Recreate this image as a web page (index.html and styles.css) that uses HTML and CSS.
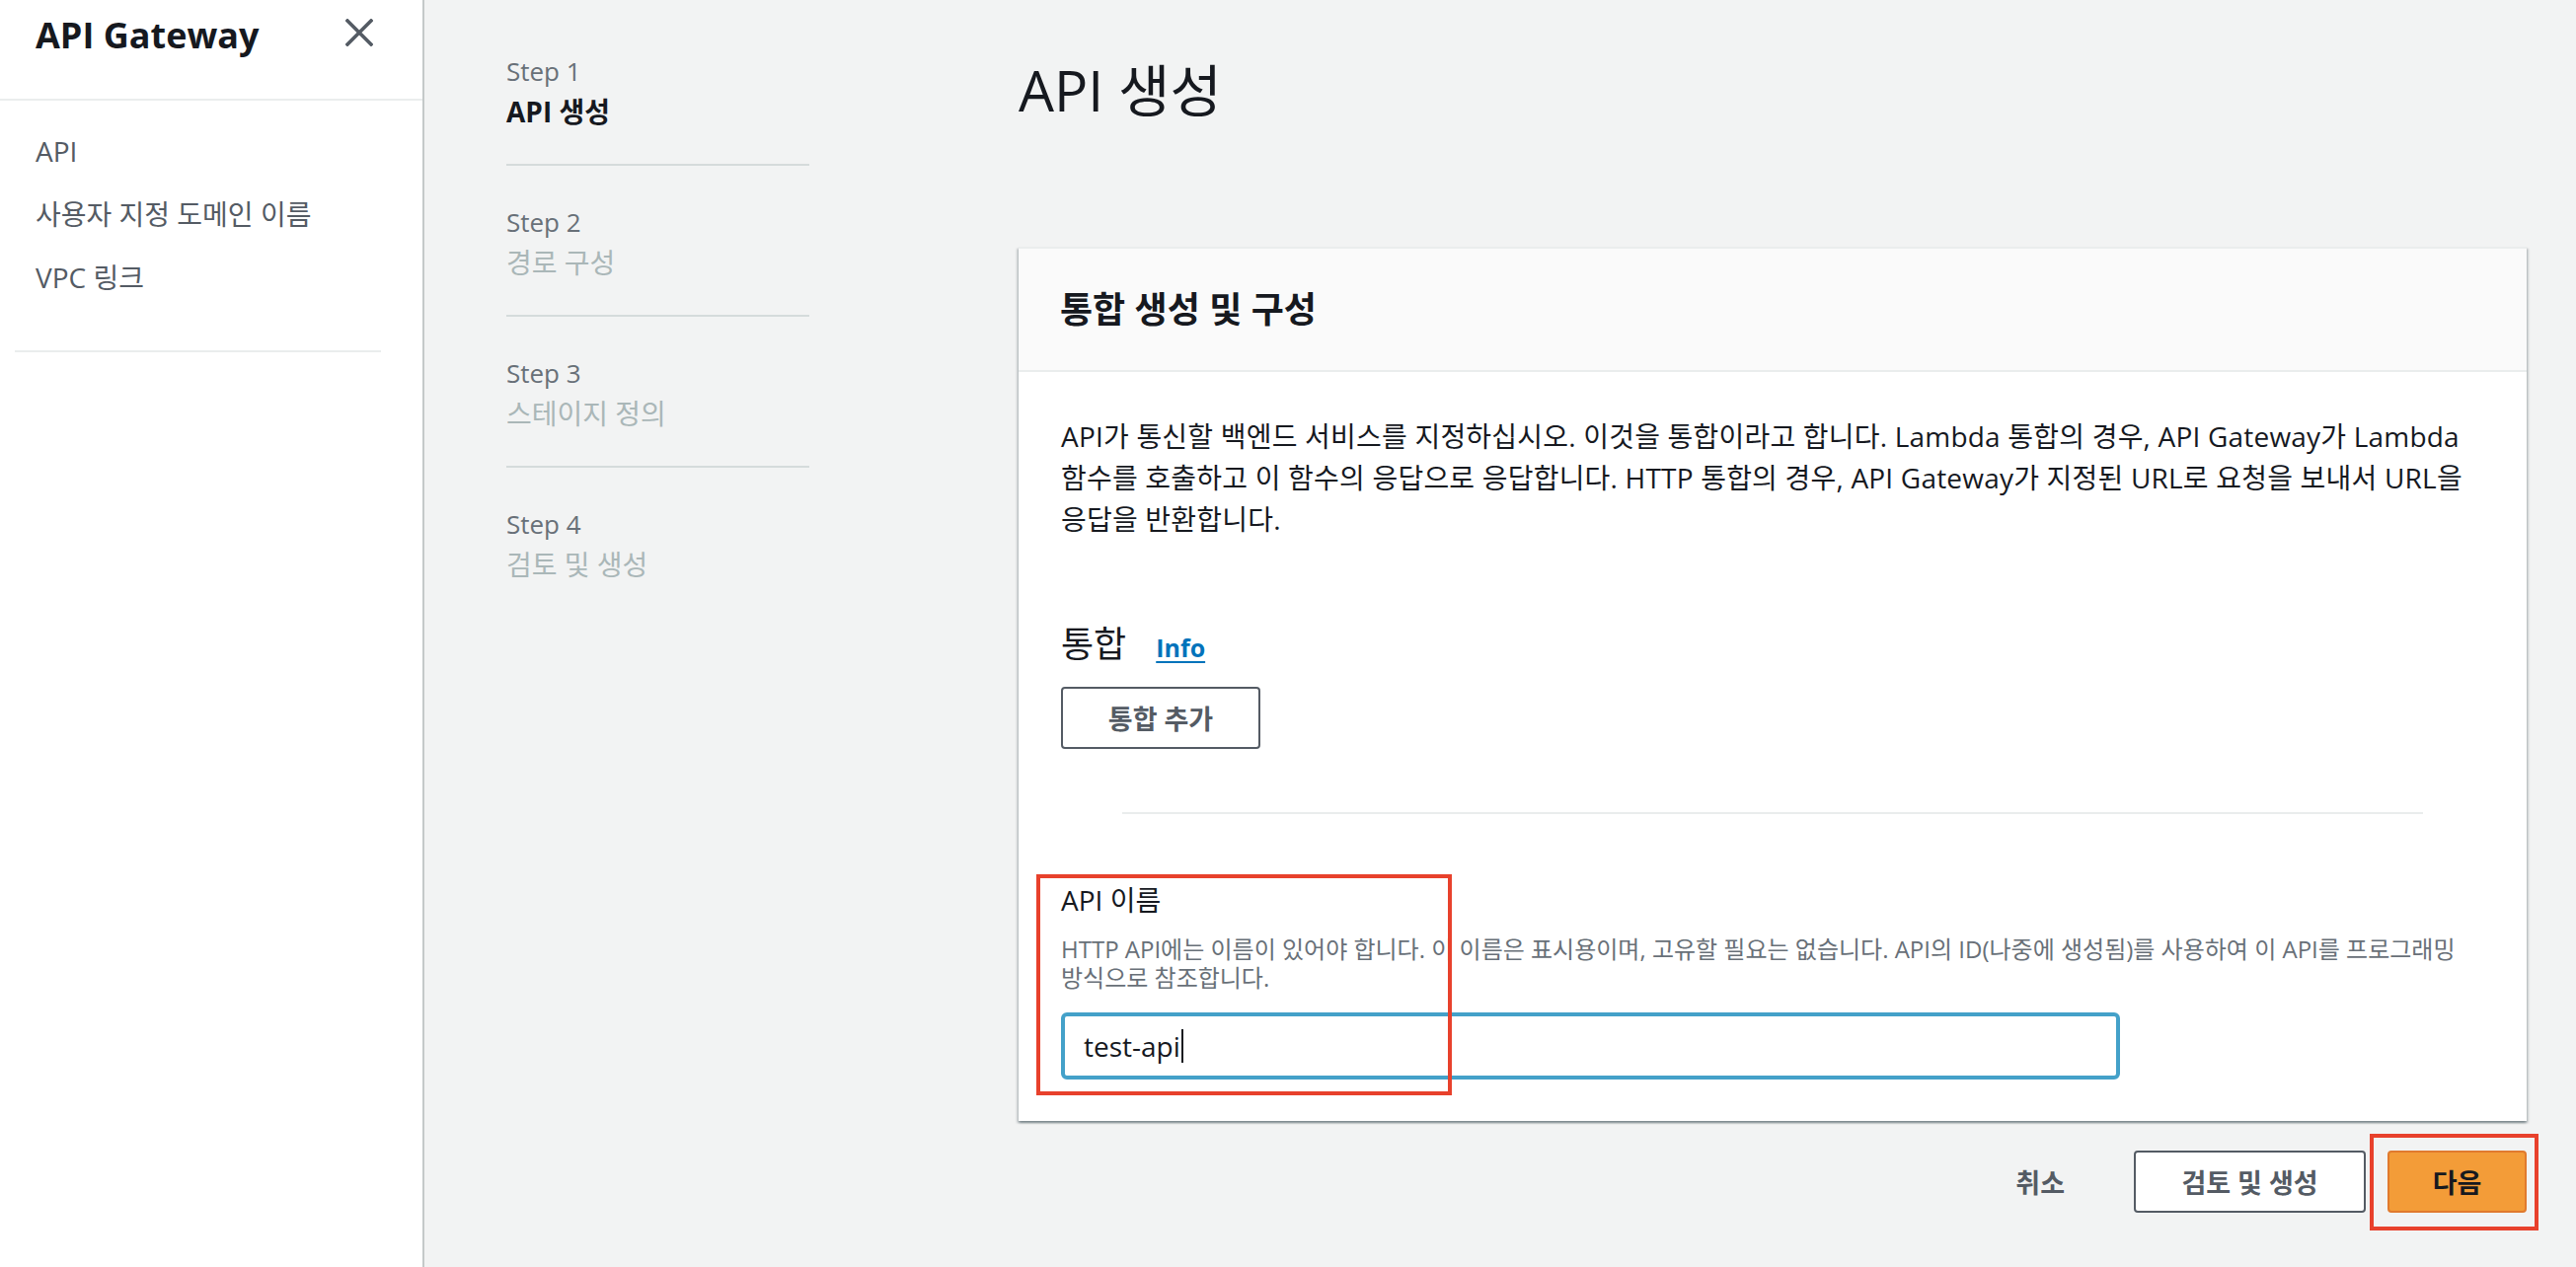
FILE: index.html
```html
<!DOCTYPE html>
<html lang="ko">
<head>
<meta charset="utf-8">
<title>API 생성</title>
<link rel="stylesheet" href="styles.css">
</head>
<body>
<div class="app">
  <aside class="sidebar">
    <div class="sidebar-header">
      <span class="sidebar-title">API Gateway</span>
      <svg class="close-icon" width="28" height="28" viewBox="0 0 28 28" aria-hidden="true">
        <path d="M2 2 L26 26 M26 2 L2 26" stroke="#545b64" stroke-width="3.6" stroke-linecap="square" fill="none"/>
      </svg>
    </div>
    <nav class="side-nav">
      <a class="side-link">API</a>
      <a class="side-link">사용자 지정 도메인 이름</a>
      <a class="side-link">VPC 링크</a>
    </nav>
    <div class="side-divider"></div>
  </aside>

  <main class="content">
    <ol class="steps">
      <li class="step active">
        <div class="step-num">Step 1</div>
        <div class="step-name">API 생성</div>
      </li>
      <li class="step">
        <div class="step-num">Step 2</div>
        <div class="step-name">경로 구성</div>
      </li>
      <li class="step">
        <div class="step-num">Step 3</div>
        <div class="step-name">스테이지 정의</div>
      </li>
      <li class="step last">
        <div class="step-num">Step 4</div>
        <div class="step-name">검토 및 생성</div>
      </li>
    </ol>

    <section class="main">
      <h1 class="page-title">API 생성</h1>

      <div class="card">
        <div class="card-header">
          <h2 class="card-title">통합 생성 및 구성</h2>
        </div>
        <div class="card-body">
          <p class="intro">API가 통신할 백엔드 서비스를 지정하십시오. 이것을 통합이라고 합니다. Lambda 통합의 경우, API Gateway가 Lambda<br>함수를 호출하고 이 함수의 응답으로 응답합니다. HTTP 통합의 경우, API Gateway가 지정된 URL로 요청을 보내서 URL을<br>응답을 반환합니다.</p>

          <div class="integration">
            <div class="integration-head">
              <h3 class="integration-title">통합</h3>
              <a class="info-link">Info</a>
            </div>
            <button class="btn btn-normal btn-add">통합 추가</button>
          </div>

          <div class="card-divider"></div>

          <div class="field">
            <div class="field-label">API 이름</div>
            <div class="field-desc">HTTP API에는 이름이 있어야 합니다. 이 이름은 표시용이며, 고유할 필요는 없습니다. API의 ID(나중에 생성됨)를 사용하여 이 API를 프로그래밍<br>방식으로 참조합니다.</div>
            <div class="input"><span class="input-text">test-api</span><span class="caret"></span></div>
          </div>
        </div>
        <div class="annot annot-field"></div>
      </div>

      <div class="actions">
        <button class="btn btn-link">취소</button>
        <button class="btn btn-normal btn-review">검토 및 생성</button>
        <span class="annot-wrap">
          <button class="btn btn-primary">다음</button>
        </span>
      </div>
    </section>
  </main>
</div>
</body>
</html>
```

FILE: styles.css
```css
* { box-sizing: border-box; }

html, body {
  margin: 0;
  padding: 0;
}

body {
  font-family: "Open Sans", "Noto Sans CJK KR", sans-serif;
  color: #16191f;
  background: #f2f3f3;
}

.app {
  display: flex;
  height: 1284px;
  overflow: hidden;
}

/* Sidebar */
.sidebar {
  width: 430px;
  flex: 0 0 430px;
  background: #ffffff;
  border-right: 2px solid #c4c9c9;
}

.sidebar-header {
  height: 102px;
  border-bottom: 2px solid #eaeded;
  display: flex;
  align-items: flex-start;
  justify-content: space-between;
  padding: 12px 50px 0 36px;
}

.sidebar-title {
  font-size: 36px;
  font-weight: 700;
  line-height: 48px;
  color: #16191f;
}

.close-icon {
  margin-top: 7px;
}

.side-nav {
  display: flex;
  flex-direction: column;
  padding: 19px 0 0 36px;
}

.side-link {
  font-size: 28px;
  line-height: 64px;
  color: #545b64;
}

.side-divider {
  margin: 42px 42px 0 15px;
  border-top: 2px solid #eaeded;
}

/* Content */
.content {
  flex: 1;
  display: grid;
  grid-template-columns: 307px 1fr;
  column-gap: 212px;
  padding: 0 50px 0 83px;
}

.steps {
  list-style: none;
  margin: 0;
  padding: 54px 0 0 0;
}

.step {
  padding-bottom: 33px;
  border-bottom: 2px solid #d5dbdb;
  margin-bottom: 39px;
}

.step.last {
  border-bottom: none;
}

.step-num {
  font-size: 26px;
  line-height: 36px;
  color: #687078;
}

.step-name {
  font-size: 28px;
  line-height: 40px;
  color: #aab7b8;
  margin-top: 3px;
}

.step.active .step-name {
  color: #16191f;
  font-weight: 700;
}

/* Main */
.main {
  display: flex;
  flex-direction: column;
}

.page-title {
  margin: 53px 0 0 0;
  font-size: 57px;
  line-height: 76px;
  font-weight: 400;
  color: #16191f;
}

.card {
  position: relative;
  margin-top: 121px;
  background: #ffffff;
  border-top: 2px solid #eaeded;
  box-shadow: 0 2px 2px 0 rgba(0, 28, 36, 0.3), 2px 2px 2px 0 rgba(0, 28, 36, 0.15), -2px 2px 2px 0 rgba(0, 28, 36, 0.15);
}

.card-header {
  height: 125px;
  background: #fafafa;
  border-bottom: 2px solid #eaeded;
  display: flex;
  align-items: center;
  padding: 0 42px;
}

.card-title {
  margin: 0;
  font-size: 36px;
  font-weight: 700;
  line-height: 48px;
  color: #16191f;
}

.card-body {
  padding: 44px 43px 42px 43px;
}

.intro {
  margin: 0;
  font-size: 28px;
  line-height: 42px;
  letter-spacing: 0.2px;
  color: #16191f;
  white-space: nowrap;
}

.integration {
  margin-top: 82px;
}

.integration-head {
  display: flex;
  align-items: baseline;
  gap: 30px;
}

.integration-title {
  margin: 0;
  font-size: 36px;
  font-weight: 400;
  line-height: 48px;
  color: #16191f;
}

.info-link {
  font-size: 25px;
  font-weight: 700;
  color: #0073bb;
  text-decoration: underline;
  text-underline-offset: 4px;
  text-decoration-thickness: 2px;
}

.btn {
  font-family: "Open Sans", "Noto Sans CJK KR", sans-serif;
  font-size: 27px;
  font-weight: 700;
  height: 63px;
  border-radius: 4px;
  padding: 0 40px;
  cursor: pointer;
  display: inline-flex;
  align-items: center;
  justify-content: center;
}

.btn-normal {
  background: #ffffff;
  color: #545b64;
  border: 2px solid #545b64;
}

.btn-add {
  margin-top: 19px;
  width: 202px;
  padding: 0;
}

.btn-review {
  width: 235px;
  padding: 0;
}

.card-divider {
  margin: 64px 62px 0 62px;
  border-top: 2px solid #eaeded;
}

.field {
  margin-top: 67px;
}

.field-label {
  font-size: 28px;
  line-height: 40px;
  color: #16191f;
}

.field-desc {
  margin-top: 15px;
  font-size: 24px;
  line-height: 29px;
  color: #687078;
  white-space: nowrap;
}

.input {
  margin-top: 21px;
  width: 1073px;
  height: 68px;
  border: 4px solid #44a1c9;
  border-radius: 6px;
  display: flex;
  align-items: center;
  padding: 0 19px;
  background: #ffffff;
}

.input-text {
  font-size: 28px;
  color: #16191f;
}

.caret {
  display: inline-block;
  width: 2px;
  height: 34px;
  background: #16191f;
  margin-left: 1px;
}

/* Annotations (red boxes) */
.annot {
  position: absolute;
  border: 4px solid #e8412c;
  pointer-events: none;
}

.annot-field {
  left: 18px;
  top: 634px;
  width: 421px;
  height: 224px;
}

.annot-wrap {
  position: relative;
  display: inline-flex;
}

.annot-wrap::after {
  content: "";
  position: absolute;
  left: -18px;
  right: -12px;
  top: -17px;
  bottom: -18px;
  border: 4px solid #e8412c;
  pointer-events: none;
}

/* Actions */
.actions {
  display: flex;
  justify-content: flex-end;
  align-items: center;
  gap: 22px;
  margin-top: 30px;
}

.btn-link {
  background: transparent;
  border: 2px solid transparent;
  color: #545b64;
  margin-right: 6px;
}

.btn-primary {
  background: #f39c38;
  border: 2px solid #e07a2e;
  color: #16191f;
  width: 141px;
  padding: 0;
}
```
